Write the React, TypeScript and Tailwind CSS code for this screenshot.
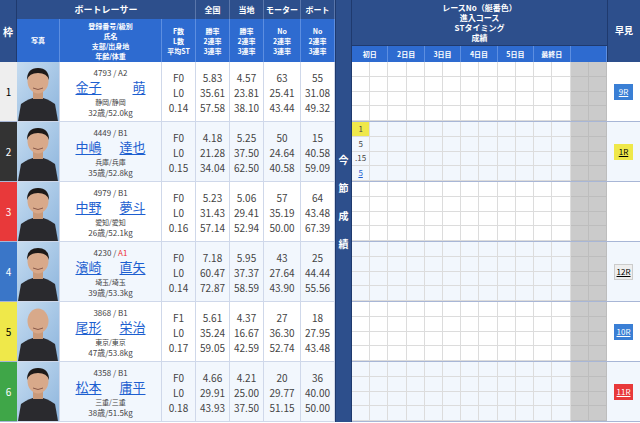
import React from 'react';

const frameColors = [
  'bg-[#eeeeee] text-black',
  'bg-[#333333] text-white',
  'bg-[#e8393a] text-white',
  'bg-[#3a76c8] text-white',
  'bg-[#efe84a] text-black',
  'bg-[#3fa648] text-white',
];

const racers = [
  { id: '4793', cls: 'A2', a: '金子', b: '萌', home: '静岡/静岡', age: '32歳/52.0kg', fl: ['F0', 'L0', '0.14'], z: ['5.83', '35.61', '57.58'], t: ['4.57', '23.81', '38.10'], m: ['63', '25.41', '43.44'], bt: ['55', '31.08', '49.32'], q: '9R', qc: 'bg-[#3a7fd5] text-white', bald: false },
  { id: '4449', cls: 'B1', a: '中嶋', b: '達也', home: '兵庫/兵庫', age: '35歳/52.8kg', fl: ['F0', 'L0', '0.15'], z: ['4.18', '21.28', '34.04'], t: ['5.25', '37.50', '62.50'], m: ['50', '24.64', '40.58'], bt: ['15', '40.58', '59.09'], q: '1R', qc: 'bg-[#efe84a] text-black', bald: false },
  { id: '4979', cls: 'B1', a: '中野', b: '夢斗', home: '愛知/愛知', age: '26歳/52.1kg', fl: ['F0', 'L0', '0.16'], z: ['5.23', '31.43', '57.14'], t: ['5.06', '29.41', '52.94'], m: ['57', '35.19', '50.00'], bt: ['64', '43.48', '67.39'], q: '', qc: '', bald: false },
  { id: '4230', cls: 'A1', a: '濱崎', b: '直矢', home: '埼玉/埼玉', age: '39歳/53.3kg', fl: ['F0', 'L0', '0.14'], z: ['7.18', '60.47', '72.87'], t: ['5.95', '37.37', '58.59'], m: ['43', '27.64', '43.90'], bt: ['25', '44.44', '55.56'], q: '12R', qc: 'bg-[#eeeeee] text-black border border-[#cccccc]', bald: false },
  { id: '3868', cls: 'B1', a: '尾形', b: '栄治', home: '東京/東京', age: '47歳/53.8kg', fl: ['F1', 'L0', '0.17'], z: ['5.61', '35.24', '59.05'], t: ['4.37', '16.67', '42.59'], m: ['27', '36.30', '52.74'], bt: ['18', '27.95', '43.48'], q: '10R', qc: 'bg-[#3a7fd5] text-white', bald: true },
  { id: '4358', cls: 'B1', a: '松本', b: '庸平', home: '三重/三重', age: '38歳/51.5kg', fl: ['F0', 'L0', '0.18'], z: ['4.66', '29.91', '43.93'], t: ['4.21', '25.00', '37.50'], m: ['20', '29.77', '51.15'], bt: ['36', '40.00', '50.00'], q: '11R', qc: 'bg-[#e8393a] text-white', bald: false },
];

const Photo = ({ bald }: { bald: boolean }) => (
  <svg viewBox="0 0 42 59" className="w-full h-full">
    <defs>
      <linearGradient id="bgp" x1="0" y1="0" x2="1" y2="1">
        <stop offset="0" stopColor="#c6dcf0" />
        <stop offset="1" stopColor="#8db5dd" />
      </linearGradient>
    </defs>
    <rect width="42" height="59" fill="url(#bgp)" />
    <path d="M1 59 L4 42 Q12 36 21 35 Q30 36 38 42 L41 59 Z" fill="#2a2a2e" />
    <rect x="16" y="28" width="10" height="9" fill="#c99a7a" />
    <ellipse cx="21" cy="19" rx="10.5" ry="12.5" fill="#d8a98a" />
    {!bald && <path d="M10 18 Q10 6 21 6 Q32 6 32 18 Q30 11 21 11 Q12 11 10 18 Z" fill="#1e1a18" />}
    <path d="M16 26 Q21 29 26 26" stroke="#8a5a4a" strokeWidth="1" fill="none" />
  </svg>
);

const cellNum = 'flex flex-col justify-around items-center py-2 text-[10px] text-[#444] border-r border-[#cfd8ea]';

export default function App() {
  const font = { fontFamily: '"Noto Sans CJK JP", "Noto Sans", sans-serif' };
  return (
    <div className="w-[640px] h-[423px] overflow-hidden bg-white" style={font}>
      <div className="grid grid-cols-[17px_43px_102px_34px_34px_34px_37px_34px_17px_255px_33px] grid-rows-[19px_43px_repeat(6,60px)]">
        <div className="row-span-2 bg-[#2d4f8c] text-white text-[10px] font-bold flex items-center justify-center border-r border-[#1f3a6e]">枠</div>
        <div className="col-span-3 bg-[#2d4f8c] text-white text-[9px] font-bold flex items-center justify-center border-r border-[#5a76aa]">ボートレーサー</div>
        {['全国', '当地', 'モーター', 'ボート'].map((h) => (
          <div key={h} className="bg-[#2d4f8c] text-white text-[8px] font-bold flex items-center justify-center border-r border-[#5a76aa]">{h}</div>
        ))}
        <div className="row-span-8 bg-[#2d4f8c] border-x border-[#1f3a6e] flex flex-col items-center pt-[152px] gap-[13px] text-white text-[10px] font-bold">
          {['今', '節', '成', '績'].map((c) => (<span key={c}>{c}</span>))}
        </div>
        <div className="row-span-2 flex flex-col">
          <div className="h-[46px] bg-[#2d4f8c] text-white text-[8px] font-bold leading-[10px] flex flex-col items-center justify-center border-b border-[#1f3a6e]">
            <span>レースNo（艇番色）</span><span>進入コース</span><span>STタイミング</span><span>成績</span>
          </div>
          <div className="flex-1 flex bg-[#2e6bd0]">
            {['初日', '2日目', '3日目', '4日目', '5日目', '最終日', ''].map((d, i) => (
              <div key={i} className="flex-1 text-white text-[7px] font-bold flex items-center justify-center border-r border-[#5d8ee0]">{d}</div>
            ))}
          </div>
        </div>
        <div className="row-span-2 bg-[#2d4f8c] text-white text-[9px] font-bold flex items-center justify-center border-l border-[#1f3a6e]">早見</div>
        <div className="bg-[#2e6bd0] text-white text-[7px] font-bold flex items-center justify-center border-r border-[#5d8ee0]">写真</div>
        <div className="bg-[#2e6bd0] text-white text-[7px] font-bold leading-[10px] flex flex-col items-center justify-center border-r border-[#5d8ee0]">
          <span>登録番号/級別</span><span>氏名</span><span>支部/出身地</span><span>年齢/体重</span>
        </div>
        <div className="bg-[#2e6bd0] text-white text-[7px] font-bold leading-[10px] flex flex-col items-center justify-center border-r border-[#5d8ee0]">
          <span>F数</span><span>L数</span><span>平均ST</span>
        </div>
        {[['勝率', '2連率', '3連率'], ['勝率', '2連率', '3連率'], ['No', '2連率', '3連率'], ['No', '2連率', '3連率']].map((l, i) => (
          <div key={i} className="bg-[#2e6bd0] text-white text-[7px] font-bold leading-[10px] flex flex-col items-center justify-center border-r border-[#5d8ee0]">
            {l.map((s) => (<span key={s}>{s}</span>))}
          </div>
        ))}
        {racers.map((r, i) => {
          const rowBg = i % 2 === 1 ? 'bg-[#f2f7fd]' : 'bg-white';
          const bb = 'border-b border-[#a8b6d6]';
          return (
            <React.Fragment key={r.id}>
              <div className={`${frameColors[i]} ${bb} text-[10px] flex items-center justify-center`} style={{ gridColumn: 1, gridRow: i + 3 }}>{i + 1}</div>
              <div className={`${bb} border-r border-[#cfd8ea]`} style={{ gridColumn: 2, gridRow: i + 3 }}><Photo bald={r.bald} /></div>
              <div className={`${rowBg} ${bb} border-r border-[#cfd8ea] flex flex-col items-center pt-[5px] text-[#444]`} style={{ gridColumn: 3, gridRow: i + 3 }}>
                <span className="text-[8px] leading-[11px]">{r.id} / <span className={r.cls === 'A1' ? 'text-[#e33]' : ''}>{r.cls}</span></span>
                <span className="w-[70px] flex justify-between text-[#1d5fd0] text-[13px] leading-[17px] underline underline-offset-2">{r.a}<span>{r.b}</span></span>
                <span className="text-[7px] leading-[10px] mt-[2px]">{r.home}</span>
                <span className="text-[8px] leading-[11px]">{r.age}</span>
              </div>
              {[r.fl, r.z, r.t, r.m, r.bt].map((vals, k) => (
                <div key={k} className={`${rowBg} ${bb} ${cellNum}`} style={{ gridColumn: k + 4, gridRow: i + 3 }}>
                  {vals.map((v, j) => (<span key={j}>{v}</span>))}
                </div>
              ))}
              <div className={`${rowBg} ${bb} grid grid-cols-14 grid-rows-4`} style={{ gridColumn: 10, gridRow: i + 3 }}>
                {Array.from({ length: 56 }).map((_, c) => {
                  const col = c % 14;
                  const row = Math.floor(c / 14);
                  const gray = col >= 12 ? 'bg-[#cbcbcb] border-[#bdbdbd]' : 'border-[#dcdcdc]';
                  let content: React.ReactNode = null;
                  if (i === 1 && col === 0) {
                    if (row === 0) content = <span className="bg-[#efe84a] w-full h-full flex items-center justify-center">1</span>;
                    if (row === 1) content = '5';
                    if (row === 2) content = '.15';
                    if (row === 3) content = <span className="text-[#1d5fd0] underline">5</span>;
                  }
                  return (
                    <div key={c} className={`${gray} border-r border-b text-[8px] text-[#444] flex items-center justify-center`}>{content}</div>
                  );
                })}
              </div>
              <div className={`${rowBg} ${bb} flex items-center justify-center`} style={{ gridColumn: 11, gridRow: i + 3 }}>
                {r.q && <span className={`${r.qc} text-[8px] underline w-[19px] h-[16px] flex items-center justify-center`}>{r.q}</span>}
              </div>
            </React.Fragment>
          );
        })}
      </div>
    </div>
  );
}
